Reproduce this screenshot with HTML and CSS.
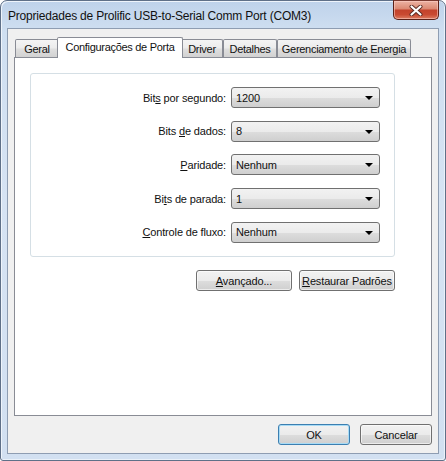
FILE: index.html
```html
<!DOCTYPE html>
<html lang="pt">
<head>
<meta charset="utf-8">
<title>Propriedades</title>
<link rel="stylesheet" href="styles.css">
</head>
<body>
<div class="window">
  <div class="titlebar">
    <span class="title">Propriedades de Prolific USB-to-Serial Comm Port (COM3)</span>
    <div class="close">
      <svg width="14" height="11" viewBox="0 0 14 11">
        <path d="M2.5 1.5 L11.5 9.5 M11.5 1.5 L2.5 9.5" stroke="#5a2a22" stroke-width="4" stroke-linecap="round" fill="none"/>
        <path d="M2.5 1.5 L11.5 9.5 M11.5 1.5 L2.5 9.5" stroke="#ffffff" stroke-width="2.2" stroke-linecap="round" fill="none"/>
      </svg>
    </div>
  </div>
  <div class="client">
    <div class="tabs">
      <div class="tab tab-geral">Geral</div>
      <div class="tab tab-config selected">Configurações de Porta</div>
      <div class="tab tab-driver">Driver</div>
      <div class="tab tab-detalhes">Detalhes</div>
      <div class="tab tab-energia">Gerenciamento de Energia</div>
    </div>
    <div class="panel">
      <div class="group">
        <div class="form">
          <label class="lbl">Bit<u>s</u> por segundo:</label>
          <div class="combo"><span>1200</span><i class="arrow"></i></div>
          <label class="lbl">Bits <u>d</u>e dados:</label>
          <div class="combo"><span>8</span><i class="arrow"></i></div>
          <label class="lbl"><u>P</u>aridade:</label>
          <div class="combo"><span>Nenhum</span><i class="arrow"></i></div>
          <label class="lbl">Bi<u>t</u>s de parada:</label>
          <div class="combo"><span>1</span><i class="arrow"></i></div>
          <label class="lbl"><u>C</u>ontrole de fluxo:</label>
          <div class="combo"><span>Nenhum</span><i class="arrow"></i></div>
        </div>
      </div>
      <div class="actions">
        <button class="btn wide"><u>A</u>vançado...</button>
        <button class="btn wide"><u>R</u>estaurar Padrões</button>
      </div>
    </div>
    <div class="footer">
      <button class="btn small default">OK</button>
      <button class="btn small">Cancelar</button>
    </div>
  </div>
</div>
</body>
</html>
```
FILE: styles.css
```css
* { box-sizing: border-box; }
html, body { margin: 0; padding: 0; }
body {
  width: 446px;
  height: 461px;
  overflow: hidden;
  background: #ffffff;
  font-family: "Liberation Sans", Arial, sans-serif;
  font-size: 11px;
  color: #000;
}
.window {
  position: relative;
  width: 446px;
  height: 461px;
  border: 1px solid #5f7088;
  border-radius: 7px 7px 3px 3px;
  background: linear-gradient(to bottom, #bed2ea 0px, #cfdff1 30px, #d6e3f3 200px, #d2e0f1 100%);
  box-shadow: inset 1px 1px 0 #eef4fb, inset -1px -1px 0 #eaf1f9;
  padding: 0 6px 6px 6px;
  display: flex;
  flex-direction: column;
}
.titlebar {
  height: 27px;
  display: flex;
  align-items: center;
  padding-left: 1px;
  padding-top: 2px;
}
.title {
  font-size: 12px;
  letter-spacing: -0.2px;
  color: #111;
}
.close {
  position: absolute;
  top: -1px;
  right: 6px;
  width: 46px;
  height: 20px;
  border: 1px solid #5b2118;
  border-top-color: #7a3a30;
  border-radius: 0 0 5px 5px;
  background: linear-gradient(to bottom, #ecb3a4 0%, #dc8a74 42%, #c3432c 52%, #c94a31 75%, #dc7d62 100%);
  box-shadow: inset 0 0 0 1px rgba(255, 210, 200, 0.55);
  display: flex;
  align-items: center;
  justify-content: center;
}
.client {
  flex: 1;
  border: 1px solid #8e9db2;
  background: #f0f0f0;
  padding: 8px 6px 0 6px;
  display: flex;
  flex-direction: column;
}
.tabs {
  height: 20px;
  display: flex;
  align-items: flex-end;
  padding-left: 1px;
  position: relative;
  z-index: 2;
}
.tab {
  height: 18px;
  border: 1px solid #898c95;
  border-bottom: none;
  border-radius: 2px 2px 0 0;
  background: linear-gradient(to bottom, #f4f4f4 0%, #ececec 45%, #dedede 55%, #d2d2d2 100%);
  display: flex;
  align-items: center;
  justify-content: center;
  white-space: nowrap;
  letter-spacing: -0.3px;
  padding-top: 1px;
  color: #111;
}
.tab.selected {
  height: 21px;
  margin: 0 -2px -1px -2px;
  background: #ffffff;
  padding-top: 0;
  padding-bottom: 3px;
  position: relative;
  z-index: 3;
}
.tab-geral { width: 44px; }
.tab-config { width: 126px; }
.tab-driver { width: 42px; }
.tab-detalhes { width: 54px; }
.tab-energia { width: 134px; }
.panel {
  height: 359px;
  border: 1px solid #898c95;
  background: #ffffff;
  padding: 15px 36px 0 15px;
  display: flex;
  flex-direction: column;
}
.group {
  height: 184px;
  border: 1px solid #d5dfe5;
  border-radius: 3px;
  padding: 13px 0 0 0;
}
.form {
  display: grid;
  grid-template-columns: 195px 149px;
  grid-auto-rows: 21px;
  column-gap: 5px;
  row-gap: 12.7px;
  align-items: center;
}
.lbl {
  text-align: right;
  letter-spacing: -0.15px;
  white-space: nowrap;
  color: #111;
}
.combo {
  height: 21px;
  border: 1px solid #707070;
  border-radius: 3px;
  background: linear-gradient(to bottom, #f2f2f2 0%, #ebebeb 50%, #dddddd 51%, #cfcfcf 100%);
  display: flex;
  align-items: center;
  justify-content: space-between;
  padding: 0 6px 0 4px;
  letter-spacing: -0.15px;
  color: #111;
}
.arrow {
  width: 0;
  height: 0;
  border-left: 4px solid transparent;
  border-right: 4px solid transparent;
  border-top: 4px solid #000;
  margin-top: 1px;
}
.actions {
  display: flex;
  justify-content: flex-end;
  gap: 7px;
  margin-top: 13px;
}
.btn {
  height: 21px;
  border: 1px solid #707070;
  border-radius: 3px;
  background: linear-gradient(to bottom, #f2f2f2 0%, #ebebeb 50%, #dddddd 51%, #cfcfcf 100%);
  box-shadow: inset 0 0 0 1px rgba(255, 255, 255, 0.6);
  font-family: "Liberation Sans", Arial, sans-serif;
  font-size: 11px;
  letter-spacing: -0.15px;
  color: #111;
  padding: 0;
}
.btn.wide { width: 96px; }
.btn.small { width: 72px; }
.btn.default {
  border-color: #3c7fb1;
  box-shadow: inset 0 0 0 1px #a8dbf5;
}
.footer {
  display: flex;
  justify-content: flex-end;
  gap: 10px;
  margin-top: 8px;
}
```
